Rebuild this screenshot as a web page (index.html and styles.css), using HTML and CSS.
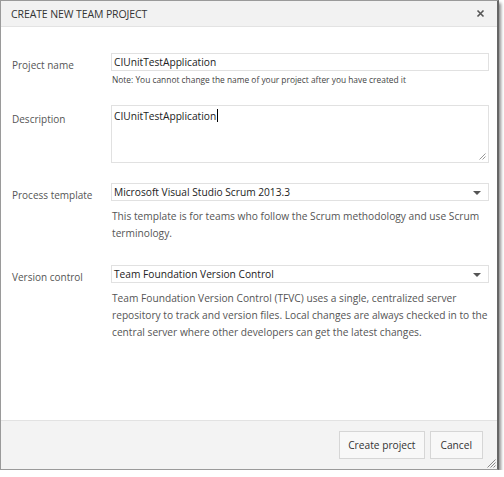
FILE: index.html
```html
<!DOCTYPE html>
<html lang="en">
<head>
    <meta charset="UTF-8">
    <title>Create New Team Project</title>
    <link rel="stylesheet" href="styles.css">
</head>
<body>
    <div class="dialog">
        <!-- Title bar -->
        <div class="dialog-header">
            <span class="dialog-title">CREATE NEW TEAM PROJECT</span>
            <svg class="close-icon" width="9" height="9" viewBox="0 0 9 9">
                <path d="M1.5 1.5 L7.5 7.5 M7.5 1.5 L1.5 7.5" stroke="#555" stroke-width="1.6"/>
            </svg>
        </div>

        <div class="dialog-body">
            <div class="field field-name">
                <label class="field-label">Project name</label>
                <div class="field-control">
                    <div class="text-input">CIUnitTestApplication</div>
                    <p class="note">Note: You cannot change the name of your project after you have created it</p>
                </div>
            </div>

            <div class="field field-desc">
                <label class="field-label">Description</label>
                <div class="field-control">
                    <div class="text-area">CIUnitTestApplication<span class="caret"></span>
                        <svg class="grip" width="7" height="7" viewBox="0 0 7 7">
                            <path d="M6.5 0.5 L0.5 6.5 M6.5 3.5 L3.5 6.5" stroke="#999" stroke-width="1"/>
                        </svg>
                    </div>
                </div>
            </div>

            <div class="field field-process">
                <label class="field-label">Process template</label>
                <div class="field-control">
                    <div class="select">Microsoft Visual Studio Scrum 2013.3<span class="arrow"></span></div>
                    <p class="help">This template is for teams who follow the Scrum methodology and use Scrum terminology.</p>
                </div>
            </div>

            <div class="field">
                <label class="field-label">Version control</label>
                <div class="field-control">
                    <div class="select">Team Foundation Version Control<span class="arrow"></span></div>
                    <p class="help">Team Foundation Version Control (TFVC) uses a single, centralized server repository to track and version files. Local changes are always checked in to the central server where other developers can get the latest changes.</p>
                </div>
            </div>
        </div>

        <div class="dialog-footer">
            <button class="btn btn-create">Create project</button>
            <button class="btn">Cancel</button>
            <svg class="footer-grip" width="9" height="9" viewBox="0 0 9 9">
                <path d="M8.5 0.5 L0.5 8.5 M8.5 3.5 L3.5 8.5 M8.5 6.5 L6.5 8.5" stroke="#888" stroke-width="1"/>
            </svg>
        </div>
    </div>
</body>
</html>
```

FILE: styles.css
```css
body {
    margin: 0;
    background-color: #ffffff;
    font-family: "Open Sans", "Noto Sans", sans-serif;
    color: #444444;
}

.dialog {
    width: 496px;
    border: 1px solid #9a9a9a;
    border-right: 2px solid #666666;
    box-shadow: 2px 3px 3px rgba(0, 0, 0, 0.45);
    background-color: #ffffff;
}

/* Title bar */
.dialog-header {
    display: flex;
    justify-content: space-between;
    align-items: center;
    height: 25px;
    padding: 0 10px 0 10px;
    background-color: #f2f2f2;
    border-bottom: 1px solid #e3e3e3;
}

.dialog-title {
    font-size: 10.5px;
    color: #333333;
    letter-spacing: -0.1px;
}

.close-icon {
    margin-right: 2px;
}

/* Form */
.dialog-body {
    height: 367px;
    padding: 26px 8px 0 11px;
}

.field {
    display: flex;
}

.field-label {
    width: 99px;
    flex-shrink: 0;
    padding-top: 5px;
    font-size: 10px;
    color: #555555;
}

.field-control {
    width: 378px;
}

.text-input,
.select {
    position: relative;
    height: 16px;
    padding: 0 0 0 2px;
    border: 1px solid #e1e1e1;
    font-size: 10.2px;
    line-height: 16px;
    color: #222222;
}

.note {
    margin: 3px 0 0 1px;
    font-size: 8.4px;
    color: #444444;
}

.field-name {
    margin-bottom: 20px;
}

.text-area {
    position: relative;
    height: 52px;
    padding: 2px 2px;
    border: 1px solid #e1e1e1;
    font-size: 10.2px;
    line-height: 16px;
    color: #222222;
}

.field-desc .field-label {
    padding-top: 7px;
}

.caret {
    display: inline-block;
    width: 1px;
    height: 13px;
    margin-left: 1px;
    vertical-align: -2px;
    background-color: #000000;
}

.grip {
    position: absolute;
    right: 2px;
    bottom: 2px;
}

.field-desc {
    margin-bottom: 20px;
}

.arrow {
    position: absolute;
    right: 7px;
    top: 7px;
    border-left: 4px solid transparent;
    border-right: 4px solid transparent;
    border-top: 4px solid #555555;
}

.help {
    margin: 7px 0 0 1px;
    font-size: 10.2px;
    line-height: 17px;
    color: #555555;
}

.field-process {
    margin-bottom: 23px;
}

/* Footer with buttons */
.dialog-footer {
    position: relative;
    display: flex;
    justify-content: flex-end;
    gap: 5px;
    height: 48px;
    padding: 0 14px 0 0;
    align-items: center;
    background-color: #f3f3f3;
    border-top: 1px solid #e2e2e2;
}

.btn {
    height: 28px;
    padding: 0 10px;
    background-color: #f8f8f8;
    border: 1px solid #d6d6d6;
    font-family: "Open Sans", "Noto Sans", sans-serif;
    font-size: 10.2px;
    color: #333333;
}

.btn-create {
    padding: 0 8px;
}

.footer-grip {
    position: absolute;
    right: 1px;
    bottom: 1px;
}
```
